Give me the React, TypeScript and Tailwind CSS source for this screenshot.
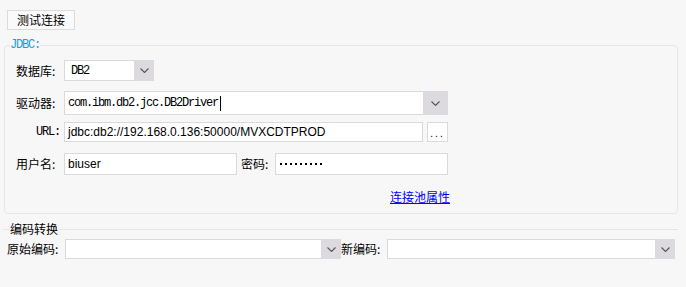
function Chevron() {
  return (
    <svg width="9" height="5" viewBox="0 0 9 5" className="block">
      <polyline points="0.5,0.5 4.5,4.5 8.5,0.5" fill="none" stroke="#555" strokeWidth="1.1" />
    </svg>
  );
}

function Select({ width, height, value, arrow = 20 }: { width: string; height: string; value?: string; arrow?: number }) {
  return (
    <div className={`flex border border-[#dadada] bg-white ${width} ${height}`}>
      <div className="flex flex-1 items-center pl-[6px] font-['Liberation_Mono',monospace] text-[12px] tracking-[-1.2px] text-black">
        {value}
      </div>
      <div className="flex items-center justify-center bg-[#dcdadf] -my-px -mr-px" style={{ width: arrow }}>
        <Chevron />
      </div>
    </div>
  );
}

export default function App() {
  return (
    <div className="w-[686px] h-[287px] overflow-hidden bg-[#f7f7f7] font-['Liberation_Sans','Noto_Sans_CJK_SC',sans-serif] text-[12px] text-black">
      <div className="pt-[10px] pl-[7px]">
        <div className="flex h-[20px] w-[68px] items-center justify-center border border-[#dcdcdc] bg-[#fafafa] font-['Noto_Sans_CJK_SC',sans-serif] text-[12px]">
          测试连接
        </div>
      </div>

      {/* JDBC */}
      <fieldset className="ml-[4px] mt-[9px] h-[175px] w-[674px] rounded-[4px] border border-[#e6e6e6]">
        <legend className="ml-[5px] font-['Liberation_Mono',monospace] text-[12px] leading-[12px] tracking-[-1.2px] text-[#1e9bd7]">
          JDBC:
        </legend>

        <div className="mt-[9px] flex items-center">
          <div className="w-[59px] pl-[11px] font-['Noto_Sans_CJK_SC',sans-serif]">数据库:</div>
          <Select width="w-[90px]" height="h-[21px]" value="DB2" />
        </div>

        <div className="mt-[10px] flex items-center">
          <div className="w-[59px] pl-[11px] font-['Noto_Sans_CJK_SC',sans-serif]">驱动器:</div>
          <div className="flex h-[24px] w-[384px] border border-[#dadada] bg-white">
            <div className="flex flex-1 items-center pl-[3px] font-['Liberation_Mono',monospace] text-[12px] tracking-[-1.2px]">
              com.ibm.db2.jcc.DB2Driver
              <span className="ml-[2px] inline-block h-[15px] w-px bg-black" />
            </div>
            <div className="-my-px -mr-px flex w-[25px] items-center justify-center bg-[#dcdadf]">
              <Chevron />
            </div>
          </div>
        </div>

        <div className="mt-[7px] flex items-center">
          <div className="w-[59px] pr-[4px] text-right font-['Liberation_Mono',monospace] text-[12px] tracking-[-1.2px]">URL:</div>
          <div className="flex h-[20px] w-[359px] items-center border border-[#dadada] bg-white pl-[3px]">
            jdbc:db2://192.168.0.136:50000/MVXCDTPROD
          </div>
          <div className="ml-[4px] flex h-[20px] w-[21px] items-end justify-center border border-[#dadada] bg-white pb-[2px] text-[10px] leading-[10px] tracking-[2px]">
            ...
          </div>
        </div>

        <div className="mt-[11px] flex items-center">
          <div className="w-[59px] pl-[11px] font-['Noto_Sans_CJK_SC',sans-serif]">用户名:</div>
          <div className="flex h-[22px] w-[173px] items-center border border-[#dadada] bg-white pl-[3px]">
            biuser
          </div>
          <div className="w-[38px] pl-[4px] font-['Noto_Sans_CJK_SC',sans-serif]">密码:</div>
          <div className="flex h-[22px] w-[173px] items-center gap-[3px] border border-[#dadada] bg-white pl-[4px]">
            {Array.from({ length: 9 }).map((_, i) => (
              <span key={i} className="inline-block h-[2px] w-[2px] bg-black" />
            ))}
          </div>
        </div>

        <div className="mt-[15px] flex">
          <a className="ml-[385px] font-['Noto_Sans_CJK_SC',sans-serif] leading-[14px] text-[#0000ff] underline">
            连接池属性
          </a>
        </div>
      </fieldset>

      {/* 编码转换 */}
      <div className="ml-[3px] mt-[8px] flex h-[14px] w-[675px] items-center">
        <div className="h-px w-[6px] bg-[#e6e6e6]" />
        <div className="px-[1px] font-['Noto_Sans_CJK_SC',sans-serif] leading-[14px]">编码转换</div>
        <div className="h-px flex-1 bg-[#e6e6e6]" />
      </div>

      <div className="mt-[3px] flex items-center pl-[7px]">
        <div className="w-[58px] font-['Noto_Sans_CJK_SC',sans-serif]">原始编码:</div>
        <Select width="w-[276px]" height="h-[20px]" />
        <div className="w-[46px] font-['Noto_Sans_CJK_SC',sans-serif]">新编码:</div>
        <Select width="w-[288px]" height="h-[20px]" />
      </div>
    </div>
  );
}
